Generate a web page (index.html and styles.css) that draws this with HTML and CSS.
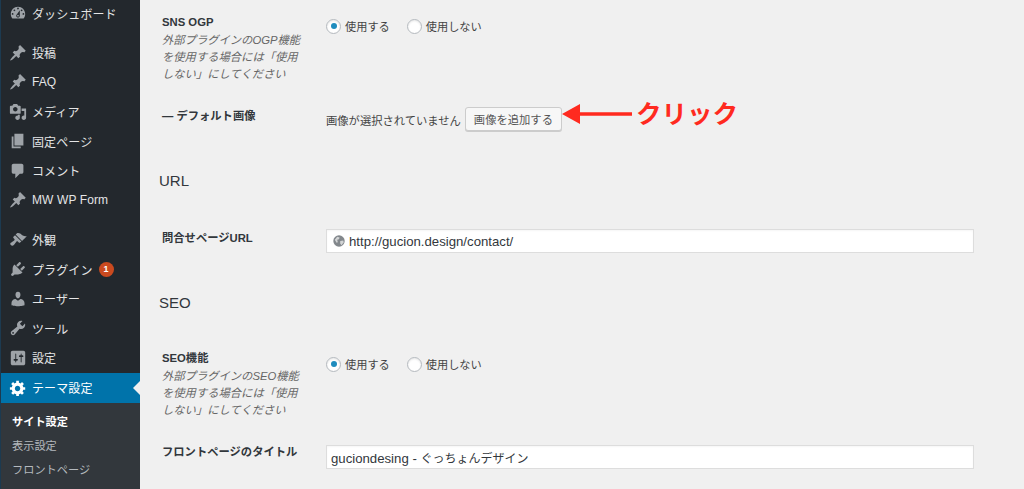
FILE: index.html
```html
<!DOCTYPE html>
<html lang="ja">
<head>
<meta charset="utf-8">
<title>テーマ設定</title>
<link rel="stylesheet" href="styles.css">
</head>
<body>
<div class="page">
  <nav class="side">
    <ul class="menu">
      <li class="item"><svg class="ico" viewBox="0 0 20 20"><path d="M3.76 16h12.48c1.1-1.37 1.76-3.11 1.76-5 0-4.42-3.58-8-8-8s-8 3.58-8 8c0 1.89.66 3.63 1.76 5zM10 4c.55 0 1 .45 1 1s-.45 1-1 1-1-.45-1-1 .45-1 1-1zM6 6c.55 0 1 .45 1 1s-.45 1-1 1-1-.45-1-1 .45-1 1-1zm8 0c.55 0 1 .45 1 1s-.45 1-1 1-1-.45-1-1 .45-1 1-1zm-5.37 5.55L12 7v6c0 1.1-.9 2-2 2s-2-.9-2-2c0-.57.24-1.08.63-1.45zM4 10c.55 0 1 .45 1 1s-.45 1-1 1-1-.45-1-1 .45-1 1-1zm12 0c.55 0 1 .45 1 1s-.45 1-1 1-1-.45-1-1 .45-1 1-1zm-5 3c0-.55-.45-1-1-1s-1 .45-1 1 .45 1 1 1 1-.45 1-1z"/></svg><span>ダッシュボード</span></li>
      <li class="item gap"><svg class="ico" viewBox="0 0 20 20"><path d="M10.44 3.02l1.82-1.82 6.36 6.35-1.83 1.82c-1.05-.68-2.48-.57-3.41.36l-.75.75c-.92.93-1.04 2.35-.35 3.41l-1.83 1.82-2.41-2.41-2.8 2.79c-.42.42-3.38 2.71-3.8 2.29s1.86-3.39 2.28-3.81l2.79-2.79L4.1 9.36l1.83-1.82c1.05.69 2.48.57 3.4-.36l.75-.75c.93-.92 1.05-2.35.36-3.41z"/></svg><span>投稿</span></li>
      <li class="item"><svg class="ico" viewBox="0 0 20 20"><path d="M10.44 3.02l1.82-1.82 6.36 6.35-1.83 1.82c-1.05-.68-2.48-.57-3.41.36l-.75.75c-.92.93-1.04 2.35-.35 3.41l-1.83 1.82-2.41-2.41-2.8 2.79c-.42.42-3.38 2.71-3.8 2.29s1.86-3.39 2.28-3.81l2.79-2.79L4.1 9.36l1.83-1.82c1.05.69 2.48.57 3.4-.36l.75-.75c.93-.92 1.05-2.35.36-3.41z"/></svg><span>FAQ</span></li>
      <li class="item"><svg class="ico" viewBox="0 0 20 20"><path d="M13 11V4c0-.55-.45-1-1-1h-1.67L9 1H5L3.67 3H2c-.55 0-1 .45-1 1v7c0 .55.45 1 1 1h10c.55 0 1-.45 1-1zM7 4.5c1.38 0 2.5 1.12 2.5 2.5S8.38 9.5 7 9.5 4.5 8.38 4.5 7 5.62 4.5 7 4.5zM14 6h5v10.5c0 1.38-1.12 2.5-2.5 2.5S14 17.88 14 16.5s1.12-2.5 2.5-2.5c.17 0 .34.02.5.05V9h-3V6zm-4 8.05V13h2v3.5c0 1.38-1.12 2.5-2.5 2.5S7 17.88 7 16.5 8.12 14 9.5 14c.17 0 .34.02.5.05z"/></svg><span>メディア</span></li>
      <li class="item"><svg class="ico" viewBox="0 0 20 20"><path d="M6 15V2h10v13H6zm-1 1h8v2H3V5h2v11z"/></svg><span>固定ページ</span></li>
      <li class="item"><svg class="ico" viewBox="0 0 20 20"><path d="M5 2h9c1.1 0 2 .9 2 2v7c0 1.1-.9 2-2 2h-2l-5 5v-5H5c-1.1 0-2-.9-2-2V4c0-1.1.9-2 2-2z"/></svg><span>コメント</span></li>
      <li class="item"><svg class="ico" viewBox="0 0 20 20"><path d="M10.44 3.02l1.82-1.82 6.36 6.35-1.83 1.82c-1.05-.68-2.48-.57-3.41.36l-.75.75c-.92.93-1.04 2.35-.35 3.41l-1.83 1.82-2.41-2.41-2.8 2.79c-.42.42-3.38 2.71-3.8 2.29s1.86-3.39 2.28-3.81l2.79-2.79L4.1 9.36l1.83-1.82c1.05.69 2.48.57 3.4-.36l.75-.75c.93-.92 1.05-2.35.36-3.41z"/></svg><span>MW WP Form</span></li>
      <li class="item gap"><svg class="ico" viewBox="0 0 20 20"><path d="M14.48 11.06L7.41 3.99l1.5-1.5c.5-.56 2.3-.47 3.51.32 1.21.8 1.43 1.28 2.91 2.1 1.18.64 2.45 1.26 4.45.85zm-.71.71L6.7 4.7 4.93 6.47c-.39.39-.39 1.02 0 1.41l1.06 1.06c.39.39.39 1.03 0 1.42-.6.6-1.43 1.11-2.21 1.69-.35.26-.7.53-1.01.84C1.43 13.23.79 14.37 2.08 15.66c1.3 1.3 2.43.65 3.77-.69.31-.31.58-.66.84-1.01.58-.78 1.09-1.61 1.69-2.21.39-.39 1.02-.39 1.41 0l1.06 1.06c.39.39 1.02.39 1.41 0z"/></svg><span>外観</span></li>
      <li class="item"><svg class="ico" viewBox="0 0 20 20"><path d="M13.11 4.36L9.87 7.6 8 5.73l3.24-3.24c.35-.34 1.05-.2 1.56.32.52.51.66 1.21.31 1.55zm-8 1.77l.91-1.12 9.01 9.01-1.19.84c-.71.71-2.63 1.16-3.82 1.16H6.14L4.9 17.26c-.59.59-1.54.59-2.12 0-.59-.58-.59-1.53 0-2.12l1.24-1.24v-3.88c0-1.13.4-3.19 1.09-3.89zm7.26 3.97l3.24-3.24c.34-.35 1.04-.21 1.55.31.52.51.66 1.21.31 1.55l-3.24 3.25z"/></svg><span>プラグイン</span><b class="badge">1</b></li>
      <li class="item"><svg class="ico" viewBox="0 0 20 20"><path d="M10 9.25c-2.27 0-2.73-3.44-2.73-3.44C7 4.02 7.82 2 9.97 2c2.16 0 2.98 2.02 2.71 3.81 0 0-.41 3.44-2.68 3.44zm0 2.57L12.72 10c2.39 0 4.52 2.33 4.52 4.53v2.49s-3.65 1.13-7.24 1.13c-3.65 0-7.24-1.13-7.24-1.13v-2.49c0-2.25 1.94-4.48 4.47-4.48z"/></svg><span>ユーザー</span></li>
      <li class="item"><svg class="ico" viewBox="0 0 20 20"><path d="M16.68 9.77c-1.34 1.34-3.3 1.67-4.95.99l-5.41 6.52c-.99.99-2.59.99-3.58 0s-.99-2.59 0-3.57l6.52-5.42c-.68-1.65-.35-3.61.99-4.95 1.28-1.28 3.12-1.62 4.72-1.06l-2.89 2.89 2.82 2.82 2.86-2.87c.53 1.58.18 3.39-1.08 4.65zM3.81 16.21c.4.39 1.04.39 1.43 0 .4-.4.4-1.04 0-1.43-.39-.4-1.03-.4-1.43 0-.39.39-.39 1.03 0 1.43z"/></svg><span>ツール</span></li>
      <li class="item"><svg class="ico" viewBox="0 0 20 20"><path d="M18 16V4c0-1.1-.9-2-2-2H4c-1.1 0-2 .9-2 2v12c0 1.1.9 2 2 2h12c1.1 0 2-.9 2-2zM8 11h1c.55 0 1 .45 1 1s-.45 1-1 1H8v1.5c0 .28-.22.5-.5.5s-.5-.22-.5-.5V13H6c-.55 0-1-.45-1-1s.45-1 1-1h1V5.5c0-.28.22-.5.5-.5s.5.22.5.5V11zm5-2h-1c-.55 0-1-.45-1-1s.45-1 1-1h1V5.5c0-.28.22-.5.5-.5s.5.22.5.5V7h1c.55 0 1 .45 1 1s-.45 1-1 1h-1v5.5c0 .28-.22.5-.5.5s-.5-.22-.5-.5V9z"/></svg><span>設定</span></li>
      <li class="item active"><svg class="ico" viewBox="0 0 20 20"><path d="M18 12h-2.18c-.17.7-.44 1.35-.81 1.93l1.54 1.54-2.1 2.1-1.54-1.54c-.58.36-1.23.63-1.91.79V19H8v-2.18c-.68-.16-1.33-.43-1.91-.79l-1.54 1.54-2.12-2.12 1.54-1.54c-.36-.58-.63-1.23-.79-1.91H1V9.03h2.17c.16-.7.44-1.35.8-1.94L2.43 5.55l2.1-2.1 1.54 1.54c.58-.37 1.24-.64 1.93-.81V2h3v2.18c.68.16 1.33.43 1.91.79l1.54-1.54 2.12 2.12-1.54 1.54c.36.59.64 1.24.8 1.94H18V12zm-8.5 1.5c1.66 0 3-1.34 3-3s-1.34-3-3-3-3 1.34-3 3 1.34 3 3 3z"/></svg><span>テーマ設定</span></li>
    </ul>
    <ul class="sub">
      <li class="sub-item current">サイト設定</li>
      <li class="sub-item">表示設定</li>
      <li class="sub-item">フロントページ</li>
    </ul>
  </nav>
  <main class="main">
    <section class="row row-ogp">
      <div class="label"><strong>SNS OGP</strong><p class="desc">外部プラグインのOGP機能を使用する場合には「使用しない」にしてください</p></div>
      <div class="radios">
        <span class="radio on"></span><span class="radio-text">使用する</span>
        <span class="radio"></span><span class="radio-text">使用しない</span>
      </div>
    </section>
    <section class="row row-img">
      <div class="label label-low"><strong>— デフォルト画像</strong></div>
      <div class="img-ctl"><span class="img-text">画像が選択されていません</span><span class="btn">画像を追加する</span></div>
    </section>
    <h2 class="head head-url">URL</h2>
    <section class="row row-url">
      <div class="label"><strong>問合せページURL</strong></div>
      <div class="field"><svg class="globe" viewBox="0 0 20 20"><circle cx="10" cy="10" r="9.5" fill="#82878c"/><path d="M3 8l4-5 4 1-1 3-3 1 1 4-2 1zM12 10l5-1 1 3-4 5-2-3z" fill="#d3d5d6"/></svg><span>http://gucion.design/contact/</span></div>
    </section>
    <h2 class="head head-seo">SEO</h2>
    <section class="row row-seo">
      <div class="label"><strong>SEO機能</strong><p class="desc">外部プラグインのSEO機能を使用する場合には「使用しない」にしてください</p></div>
      <div class="radios">
        <span class="radio on"></span><span class="radio-text">使用する</span>
        <span class="radio"></span><span class="radio-text">使用しない</span>
      </div>
    </section>
    <section class="row row-title">
      <div class="label"><strong>フロントページのタイトル</strong></div>
      <div class="field field-plain"><span>guciondesing - <span class="cjk">ぐっちょんデザイン</span></span></div>
    </section>
  </main>
  <div class="note">
    <svg class="arrow" viewBox="0 0 70 20"><path d="M0 10L18 0v8.2h52v3.6H18V20z" fill="#ff2a1f"/></svg>
    <span class="note-text">クリック</span>
  </div>
</div>
</body>
</html>
```
FILE: styles.css
```css
* { box-sizing: border-box; }
html, body { margin: 0; height: 100%; overflow: hidden; }
body { background: #f0f0f0; color: #444; font-family: "Liberation Sans", "Noto Sans CJK JP", sans-serif; font-size: 12px; }
ul { list-style: none; margin: 0; padding: 0; }
.page { position: relative; display: flex; width: 1024px; height: 489px; overflow: hidden; }

.side { width: 140px; height: 489px; flex: none; background: #23282d; color: #eee; border-left: 1px solid #1c3a50; }
.menu { margin-top: -1.5px; }
.item { display: flex; align-items: center; height: 29.5px; padding-left: 8px; font-size: 12px; letter-spacing: .1px; color: #e4e5e6; }
.item.gap { margin-top: 10px; }
.ico { width: 18px; height: 18px; flex: none; margin-right: 5px; fill: #9ea3a8; }
.badge { display: flex; align-items: center; justify-content: center; width: 15px; height: 15px; margin-left: 6px; border-radius: 50%; background: #ca4a1f; color: #fff; font-size: 9px; }
.item.active { position: relative; background: #0073aa; color: #fff; height: 30px; }
.item.active .ico { fill: #fff; }
.item.active::after { content: ""; position: absolute; right: 0; top: 8px; border: 7px solid transparent; border-left-width: 0; border-right-color: #f0f0f0; }
.sub { height: 86px; padding: 7.5px 0 0 11px; background: #32373c; }
.sub-item { height: 24px; line-height: 24px; color: #b4b9be; font-size: 11.2px; }
.sub-item.current { color: #fff; font-weight: 700; }

.main { flex: 1; padding-left: 22px; padding-right: 50px; }
.row { display: grid; grid-template-columns: 164px 648px; }
.label strong { display: block; font-size: 11.3px; line-height: 16px; color: #32373c; }
.label-low { padding-top: 2px; }
.desc { margin: 2px 0 0; width: 145px; font-size: 11.3px; line-height: 17px; font-style: italic; color: #666; }
.radios { display: flex; align-items: center; height: 16px; font-size: 11.2px; color: #444; }
.radio { width: 15px; height: 15px; flex: none; margin-right: 4px; border-radius: 50%; background: #fff; border: 1px solid #b4b9be; box-shadow: inset 0 1px 2px rgba(0,0,0,.1); display: flex; align-items: center; justify-content: center; }
.radio.on::before { content: ""; width: 6px; height: 6px; border-radius: 50%; background: #1e8cbe; }
.radio-text { margin-right: 17px; }

.row-ogp { margin-top: 14px; }
.row-ogp .radios { margin-top: 4px; }
.row-img { margin-top: 23px; }
.img-ctl { display: flex; align-items: center; gap: 4px; padding-top: 1px; font-size: 11.3px; color: #444; }
.img-text { padding-top: 1px; }
.btn { display: flex; align-items: center; justify-content: center; width: 97px; height: 24px; font-size: 11.3px; color: #555; background: #f7f7f7; border: 1px solid #ccc; border-radius: 3px; box-shadow: 0 1px 0 #ccc; }
.head { margin: 0; font-size: 15px; line-height: 20px; font-weight: 400; color: #32373c; }
.head-url { margin-top: 40px; margin-left: -3px; }
.head-seo { margin-top: 40px; margin-left: -3px; }
.row-url { margin-top: 38px; }
.row-url .label { padding-top: 1px; }
.field { display: flex; align-items: center; height: 24px; padding-left: 6px; font-size: 13.2px; color: #32373c; background: #fff; border: 1px solid #ddd; box-shadow: inset 0 1px 2px rgba(0,0,0,.04); }
.field-plain { padding-left: 4px; }
.cjk { font-size: 12px; }
.globe { width: 12px; height: 12px; margin-right: 4px; flex: none; }
.row-seo { margin-top: 37px; }
.row-seo .radios { margin-top: 6px; }
.row-title { margin-top: 26px; }
.row-title .label { margin-top: -1px; }

.note { position: absolute; left: 562px; top: 104px; display: flex; align-items: flex-start; }
.arrow { width: 70px; height: 20px; flex: none; }
.note-text { font-family: "Noto Sans CJK JP", sans-serif; font-weight: 700; font-size: 25.5px; line-height: 26px; color: #ff2a1f; margin: -5px 0 0 4px; }
```
